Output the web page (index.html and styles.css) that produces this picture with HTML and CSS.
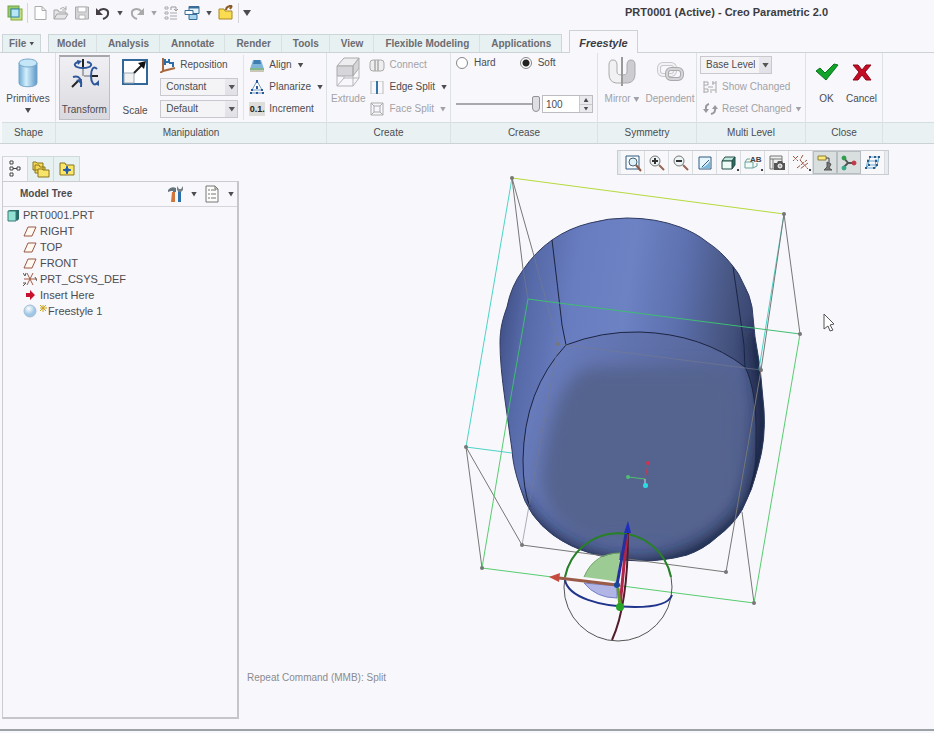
FILE: index.html
```
<!DOCTYPE html>
<html lang="en">
<head>
    <meta charset="UTF-8">
    <meta name="viewport" content="width=device-width, initial-scale=1.0">
    <link rel="stylesheet" href="styles.css">
    <title>PRT0001 (Active) - Creo Parametric 2.0</title>
</head>
<body>
    <header class="titlebar">
        <div class="quick">
            <button aria-label="Window"><svg width="16" height="16"><rect x="1" y="1" width="11" height="11" fill="#9cc96a" stroke="#6ea548"/><rect x="4" y="4" width="11" height="11" fill="#c8dc82" stroke="#82ad3d"/><rect x="4" y="4" width="8" height="8" fill="#b8e6f5" stroke="#2a84b4"/></svg></button>
            <span class="line"></span>
            <button aria-label="New"><svg width="16" height="16"><path d="M3 1.500h7l4 4v9H3zM10 1.500v4h4" fill="#fff" stroke="#aaa"/></svg></button>
            <button aria-label="Open"><svg width="16" height="16"><path d="M1 14V5h4l1 2h7v2M1 14l3-5h11l-3 5z" fill="#e4e4e6" stroke="#a5a5a8"/><path d="M7 4q3-3 6 0M13 1v4H9" fill="none" stroke="#aaa"/></svg></button>
            <button aria-label="Save"><svg width="16" height="16"><path d="M1.500 2h13v12h-13z" fill="#d5d5d7" stroke="#aaa"/><path d="M4 2h8v5H4zM5 10h6v4H5z" fill="#fff" stroke="#b5b5b8"/></svg></button>
            <button aria-label="Undo"><svg width="16" height="16"><path d="M3 7c4-5 11-3 10 2q0 3-5 5" fill="none" stroke="#443f44" stroke-width="2"/><path d="M1 3v7h7z" fill="#443f44"/></svg></button>
            <button class="drop" aria-label="Undo list"><i class="caret"></i></button>
            <button aria-label="Redo"><svg width="16" height="16"><path d="M13 7C9 2 2 4 3 9q0 3 5 5" fill="none" stroke="#aaa" stroke-width="2"/><path d="M15 3v7H8z" fill="#aaa"/></svg></button>
            <button class="drop off" aria-label="Redo list"><i class="caret"></i></button>
            <button aria-label="Regenerate"><svg width="16" height="16"><path d="M2 2h3v2H2zM2 7h3v2H2zM2 12h3v2H2zM7 8h7M7 11h7M7 14h7" fill="none" stroke="#aaa"/><path d="M8 5V2h5M13 2v4M11 4l2 2 2-2" fill="none" stroke="#999"/></svg></button>
            <button aria-label="Windows"><svg width="16" height="16"><path d="M5 1.500h10v7H5z" fill="#e8f4fb" stroke="#386d96"/><path d="M5 2.500h10" stroke="#386d96" stroke-width="2"/><path d="M1 5.500h8v4H1z" fill="#fff" stroke="#386d96"/><path d="M5 9.500h8v5H5z" fill="#a8d5ee" stroke="#386d96"/></svg></button>
            <button class="drop" aria-label="Window list"><i class="caret"></i></button>
            <button aria-label="Close"><svg width="16" height="16"><path d="M1 14V4h5l1 2h7v8z" fill="#f9dc50" stroke="#a98720"/><path d="M8 5c0-3 3-4 6-4M14 1l-3-1M14 1l-2 3" fill="none" stroke="#8c5a26" stroke-width="2"/></svg></button>
            <span class="line"></span>
            <button class="drop" aria-label="Customize"><i class="caret big"></i></button>
        </div>
        <h1>PRT0001 (Active) - Creo Parametric 2.0</h1>
    </header>

    <nav class="tabs">
        <a class="file" href="#file">File <i class="caret small"></i></a>
        <div class="tabset">
            <a href="#model">Model</a>
            <a href="#analysis">Analysis</a>
            <a href="#annotate">Annotate</a>
            <a href="#render">Render</a>
            <a href="#tools">Tools</a>
            <a href="#view">View</a>
            <a href="#flexible">Flexible Modeling</a>
            <a href="#applications">Applications</a>
        </div>
        <a class="current" href="#freestyle">Freestyle</a>
    </nav>

    <section class="ribbon">
        <div class="group shape">
            <div class="tools">
                <button class="big">
                    <svg width="24" height="34" viewBox="0 0 24 34"><defs><linearGradient id="cyl"><stop stop-color="#6fa9d4"/><stop offset=".4" stop-color="#d3effc"/><stop offset="1" stop-color="#5c96c6"/></linearGradient></defs><path d="M3 7v20c0 5 18 5 18 0V7z" fill="url(#cyl)" stroke="#78a8cc"/><ellipse cx="12" cy="7" rx="9" ry="4" fill="#c5e6f7" stroke="#78a8cc"/></svg>
                    <span>Primitives</span><i class="caret"></i>
                </button>
            </div>
            <h2>Shape</h2>
        </div>

        <div class="group manipulation">
            <div class="tools">
                <button class="big pressed">
                    <svg width="32" height="32" viewBox="0 0 32 32"><g fill="none"><path d="M15 18V9M16 18h8" stroke="#a5a8aa" stroke-width="2"/><path d="M15 1v8M24 18h6" stroke="#222" stroke-width="2"/><path d="M11 4C4 5 6 10 15 10s11-5 4-6M29 11c-4-4-6 1-6 7s3 11 6 7M5 19c6-2 9 2 8 10" stroke="#2d579b" stroke-width="2"/><path d="M4 29l7-7" stroke="#222" stroke-width="2"/></g><path d="M9 2l5 1-4 4zM31 22l-4 4 4 2zM8 22l6-1-1 5z" fill="#2d579b"/></svg>
                    <span>Transform</span>
                </button>
                <button class="big">
                    <svg width="28" height="32" viewBox="0 0 28 32"><path d="M2 4h24v24H2z" fill="#fff" stroke="#326799" stroke-width="2"/><path d="M3 17h10v10H3z" fill="#f1f1f1" stroke="#9aa9b5"/><path d="M13 17L23 7" stroke="#222" stroke-width="2"/><path d="M25 5l-2 8-6-6z" fill="#111"/></svg>
                    <span>Scale</span>
                </button>
                <div class="rows">
                    <button><svg width="16" height="16"><path d="M3 1v13M3 14l12-3M3 14l-3 2" stroke="#a9683d" stroke-width="2" fill="none"/><path d="M5 8V2M5 5h4V2M9 6h4v4" stroke="#2d6ea6" stroke-width="2" fill="none"/></svg>Reposition</button>
                    <span class="select"><select aria-label="Constraint"><option>Constant</option></select></span>
                    <span class="select"><select aria-label="Mode"><option>Default</option></select></span>
                </div>
                <div class="rows ruled">
                    <button><svg width="16" height="16"><path d="M4 3h8l3 9H1z" fill="#7fb4d9"/><path d="M5 3h6l1 4H4z" fill="#3e7eb3"/><path d="M1 11h14v2H1z" fill="#84b78c"/><path d="M1 14h14" stroke="#9b9673"/></svg>Align<i class="caret"></i></button>
                    <button><svg width="16" height="16"><path d="M8 2L3 11h10zM1 14h14" fill="#fff" stroke="#7099bd"/><path d="M7 1h2v3H7zM7 7h2v3H7zM2 10h2v2H2zM12 10h2v2h-2zM1 13h2v2H1zM7 13h2v2H7zM13 13h2v2h-2z" fill="#285999"/></svg>Planarize<i class="caret"></i></button>
                    <button><span class="digits">0.1.</span>Increment</button>
                </div>
            </div>
            <h2>Manipulation</h2>
        </div>

        <div class="group create">
            <div class="tools">
                <button class="big off">
                    <svg width="26" height="32" viewBox="0 0 26 32"><path d="M2 10l7-8h15l-6 8z" fill="#ededf0" stroke="#aaa"/><path d="M2 10h16v10H2zM18 10l6-8v10l-6 8z" fill="#d6d5da" stroke="#aaa"/><path d="M2 20v10h16V20M18 30l6-8V12M2 30l7-8h15M9 22v-2" fill="none" stroke="#b5b5b8"/></svg>
                    <span>Extrude</span>
                </button>
                <div class="rows">
                    <button class="off"><svg width="16" height="16"><path d="M6 3H4Q1 3 1 6v5q0 3 3 3h2zM6 3h3v11H6zM9 3h3q3 0 3 3v5q0 3-3 3H9z" fill="#eee" stroke="#aaa"/></svg>Connect</button>
                    <button><svg width="16" height="16"><path d="M2 2.500h12M2 14.500h12" stroke="#ddd"/><path d="M2 2v13M14 2v13" stroke="#bbb"/><path d="M8 2v13" stroke="#3475a5" stroke-width="2"/></svg>Edge Split<i class="caret"></i></button>
                    <button class="off"><svg width="16" height="16"><path d="M2 2h12v12H2zM5 5h6v6H5zM2 2l3 3M14 2l-3 3M2 14l3-3M14 14l-3-3" fill="none" stroke="#aaa"/></svg>Face Split<i class="caret"></i></button>
                </div>
            </div>
            <h2>Create</h2>
        </div>

        <div class="group crease">
            <div class="tools">
                <div class="choice">
                    <label><input type="radio" name="crease">Hard</label>
                    <label><input type="radio" name="crease" checked>Soft</label>
                </div>
                <div class="amount">
                    <input type="range" min="0" max="100" value="100" aria-label="Crease amount">
                    <div class="spin">
                        <input type="text" value="100" aria-label="Crease value">
                        <button aria-label="Increase"><i class="caret up"></i></button>
                        <button aria-label="Decrease"><i class="caret small"></i></button>
                    </div>
                </div>
            </div>
            <h2>Crease</h2>
        </div>

        <div class="group symmetry">
            <div class="tools">
                <button class="big off">
                    <svg width="30" height="32" viewBox="0 0 30 32"><path d="M15 27H9Q2 26 2 18V9q0-5 4-5t4 5v7q0 3 5 3z" fill="#f1f1f3" stroke="#aaa"/><path d="M15 27h6q7-1 7-9V9q0-5-4-5t-4 5v7q0 3-5 3z" fill="#ccccd1" stroke="#aaa"/><path d="M15 1v29" stroke="#999" stroke-width="2"/></svg>
                    <span>Mirror <i class="caret"></i></span>
                </button>
                <button class="big off">
                    <svg width="30" height="32" viewBox="0 0 30 32"><g fill="none"><rect x="4" y="8" width="16" height="11" rx="4" stroke="#c9c9cc" stroke-width="4"/><rect x="4" y="8" width="16" height="11" rx="4" stroke="#f3f3f5" stroke-width="2"/><rect x="12" y="13" width="15" height="10" rx="4" stroke="#aaa" stroke-width="4"/><rect x="12" y="13" width="15" height="10" rx="4" stroke="#d5d5d9" stroke-width="2"/></g></svg>
                    <span>Dependent</span>
                </button>
            </div>
            <h2>Symmetry</h2>
        </div>

        <div class="group level">
            <div class="tools">
                <div class="rows">
                    <span class="select"><select aria-label="Level"><option>Base Level</option></select></span>
                    <button class="off"><svg width="16" height="16"><path d="M2 2v12M2 3h4v3H2M2 10h4v3H2M14 2v12M10 4h4M10 11h4M6 8h5M11 2v4M9 10v4" fill="none" stroke="#aaa"/></svg>Show Changed</button>
                    <button class="off"><svg width="16" height="16"><path d="M7 3Q3 4 4 9M9 13q5-1 4-6" fill="none" stroke="#999" stroke-width="2"/><path d="M1 8h6l-3 4zM10 8h6l-3-4z" fill="#999"/></svg>Reset Changed<i class="caret"></i></button>
                </div>
            </div>
            <h2>Multi Level</h2>
        </div>

        <div class="group close">
            <div class="tools">
                <button class="big"><svg width="24" height="32" viewBox="0 0 24 32"><path d="M1 15l4-3 5 5L19 8l4 1-12 15z" fill="#13a32b" stroke="#08751a"/></svg><span>OK</span></button>
                <button class="big"><svg width="24" height="32" viewBox="0 0 24 32"><path d="M3 9h5l4 5 4-5h5l-6 7 6 8h-5l-4-5-4 5H3l6-8z" fill="#c40c24" stroke="#8f0618"/></svg><span>Cancel</span></button>
            </div>
            <h2>Close</h2>
        </div>
        <div class="group rest"><h2></h2></div>
    </section>

    <main>
        <aside>
            <div class="sidetabs">
                <button class="on" aria-label="Model Tree"><svg width="16" height="18"><path d="M3 1h3v3H3zM3 7h3v3H3zM3 13h3v3H3zM10 7h3v3h-3zM6 8.500h4" fill="#fff" stroke="#444"/></svg></button>
                <button aria-label="Folder Browser"><svg width="18" height="18"><path d="M1 10V2h3l1 1h6v7zM3 13V5h4l1 2h5v6z" fill="#f5da55" stroke="#8b7421"/><path d="M6 17V9h4l1 1h6v7z" fill="#f9e46a" stroke="#8b7421"/></svg></button>
                <button aria-label="Favorites"><svg width="18" height="18"><path d="M2 15V3h5l1 2h8v10z" fill="#fae667" stroke="#8b7421"/><path d="M9 6l1 3 3 1-3 1-1 3-1-3-3-1 3-1z" fill="#245baa" stroke="#245baa"/></svg></button>
            </div>
            <div class="panel">
                <div class="panelhead">
                    <h3>Model Tree</h3>
                    <button aria-label="Settings"><svg width="18" height="18"><path d="M2 5q3-4 8-2v4H7V6H5L2 7z" fill="#65747c"/><path d="M6 7h3v10H5z" fill="#d2753b"/><path d="M12 6h3v11h-3z" fill="#2d6fa9"/><path d="M11 1v4l2 2h2l2-2V1l-2 3h-2z" fill="#778086"/></svg><i class="caret"></i></button>
                    <button aria-label="Show"><svg width="18" height="18"><path d="M3 1h9l3 3v13H3z" fill="#fcfcfa" stroke="#777"/><path d="M5 5h2M5 9h2M5 13h2M8 5h5M8 9h5M8 13h5" stroke="#777"/><path d="M12 1v3h3" fill="none" stroke="#777"/></svg><i class="caret"></i></button>
                </div>
                <ul class="tree">
                    <li class="root"><svg width="14" height="14"><path d="M2 3l2-1h9v9l-2 2z" fill="#266c69"/><path d="M2 3h8v10H2z" fill="#91e2d2" stroke="#397b76"/></svg>PRT0001.PRT</li>
                    <li><svg width="14" height="14"><path d="M5 3h8l-4 9H1z" fill="#fff9f2" stroke="#985844"/></svg>RIGHT</li>
                    <li><svg width="14" height="14"><path d="M5 3h8l-4 9H1z" fill="#fff9f2" stroke="#985844"/></svg>TOP</li>
                    <li><svg width="14" height="14"><path d="M5 3h8l-4 9H1z" fill="#fff9f2" stroke="#985844"/></svg>FRONT</li>
                    <li><svg width="14" height="14"><path d="M4 1l6 12M10 1L4 13M1 7h13" fill="none" stroke="#a15c43"/><path d="M0 1l2 3 1-3M0 11h3l-3 3M12 5l2 4" fill="none" stroke="#555"/></svg>PRT_CSYS_DEF</li>
                    <li><svg width="14" height="14"><path d="M3 5h4V2l5 5-5 5V9H3z" fill="#c6102e"/></svg>Insert Here</li>
                    <li><svg width="14" height="14"><defs><radialGradient id="ball" cx=".4" cy=".3"><stop stop-color="#fff"/><stop offset="1" stop-color="#9fc6e5"/></radialGradient></defs><circle cx="7" cy="7" r="6" fill="url(#ball)" stroke="#a2bfd6"/></svg><svg class="spark" width="8" height="14"><path d="M4 1v7M1 4h7M1 1l6 6M7 1L1 7" stroke="#c8a31e"/></svg>Freestyle 1</li>
                </ul>
            </div>
        </aside>

        <section class="canvas">
            <svg class="scene" viewBox="240 144 694 585">
                <defs>
                    <linearGradient id="side" gradientUnits="userSpaceOnUse" x1="500" y1="330" x2="764" y2="370">
                        <stop stop-color="#42528a"/><stop offset=".08" stop-color="#5568a6"/><stop offset=".25" stop-color="#687dc0"/><stop offset=".45" stop-color="#6c82c3"/><stop offset=".65" stop-color="#5d70ae"/><stop offset=".82" stop-color="#485784"/><stop offset="1" stop-color="#303b64"/>
                    </linearGradient>
                    <linearGradient id="front" gradientUnits="userSpaceOnUse" x1="530" y1="360" x2="745" y2="450">
                        <stop stop-color="#6a7dbe"/><stop offset=".3" stop-color="#6375b2"/><stop offset="1" stop-color="#4e5d8b"/>
                    </linearGradient>
                    <path id="hull" d="M500 343C500 328 503 318 507 307Q511 286 523 270Q535 252 552 240Q569 228 590 223Q608 218 627 218Q656 218 680 227Q696 233 707 242Q721 251 732 265Q739 273 743 283Q750 295 752 307L755 337L760 367L764 410Q766 440 758 467Q753 489 742 510Q733 525 717 537Q704 549 687 555Q665 561 640 561Q612 560 590 553Q570 547 553 535Q541 526 533 515Q524 502 520 487Q513 467 512 450L505 400Q500 365 500 343Z"/>
                    <path id="face" d="M566 345Q602 331 640 332Q702 334 745 367Q758 395 756 440Q756 482 742 510Q733 525 717 537Q704 549 687 555Q665 561 640 561Q612 560 590 553Q570 547 553 535Q541 526 533 515Q523 490 523 460Q524 390 566 345Z"/>
                    <clipPath id="hullclip"><use href="#hull"/></clipPath>
                    <clipPath id="faceclip"><use href="#face"/></clipPath>
                    <filter id="soft" x="-20%" y="-20%" width="140%" height="140%"><feGaussianBlur stdDeviation="8"/></filter>
                </defs>

                <use href="#hull" fill="url(#side)"/>
                <use href="#face" fill="url(#front)"/>
                <g clip-path="url(#faceclip)"><path d="M595 367H715Q737 370 738 405V500Q728 538 680 541H590Q543 524 542 475Q555 370 595 367Z" fill="#55648f" filter="url(#soft)"/></g>
                <g clip-path="url(#hullclip)"><path d="M760 330L770 410Q768 485 745 518Q702 568 640 570Q550 567 512 500" fill="none" stroke="#17203f" stroke-width="20" filter="url(#soft)"/></g>
                <use href="#hull" fill="none" stroke="#303b61"/>

                <g class="seams">
                    <path d="M552 240Q558 290 562 325L566 345Q602 331 640 332Q702 334 745 367Q757 390 756 440V465L750 490"/>
                    <path d="M566 345Q524 390 523 460Q523 490 530 507M733 267Q738 300 744 345L745 367"/>
                </g>

                <g class="cage">
                    <path stroke="#b5da3b" d="M512 178L784 214"/>
                    <path stroke="#4bd4c6" d="M512 178L466 447L512 453M784 214L759 369"/>
                    <path stroke="#777" d="M512 178L523 269M512 178L534 256M784 214L800 334M784 214L761 370M466 447L482 568M466 447L522 545L726 572M754 603L742 512"/>
                    <path stroke="#777b8c" stroke-opacity=".6" d="M523 269L528 299M534 256L558 344L522 545M558 344L761 370"/>
                    <path stroke="#777" d="M761 370L726 572"/>
                    <path stroke="#3fbd72" d="M528 299L800 334M528 299L507 419"/>
                    <path stroke="#57cc70" d="M507 419L482 568L754 603L800 334"/>
                </g>
                <g fill="#777">
                    <circle cx="512" cy="178" r="2"/><circle cx="784" cy="214" r="2"/><circle cx="800" cy="334" r="2"/><circle cx="761" cy="370" r="2"/><circle cx="466" cy="447" r="2"/><circle cx="522" cy="545" r="2"/><circle cx="482" cy="568" r="2"/><circle cx="726" cy="572" r="2"/><circle cx="754" cy="603" r="2"/><circle cx="558" cy="344" r="2"/>
                </g>

                <path d="M645 479L648 464" stroke="#c33b56"/><path d="M645 479L628 477" stroke="#50c070"/><path d="M645 479V485" stroke="#d5dce5"/>
                <circle cx="648" cy="463" r="2" fill="#d03350"/><circle cx="628" cy="477" r="2" fill="#50c070"/><rect x="643" y="483" width="5" height="5" rx="2" fill="#29dce2"/>

                <!-- 3D dragger -->
                <g fill="none">
                    <circle cx="618" cy="587" r="54" stroke="#555"/>
                    <path d="M584 577Q592 555 620 553L617 582L607 580Z" fill="#9ccc93"/><path d="M584 577Q594 553 620 553" stroke="#68a660"/>
                    <path d="M584 583L617 586V598Q596 598 584 583Z" fill="#b0b5e6" stroke="#7481c6"/>
                    <path d="M565 577A54 54 0 0 1 671 577" stroke="#278127" stroke-width="2"/>
                    <path d="M565 580C568 597 600 607 635 607Q668 607 672 595" stroke="#22358c" stroke-width="2"/>
                    <path d="M628 533Q628 605 612 640" stroke="#541c2b" stroke-width="2"/>
                    <path d="M627 534L620 606" stroke="#b02449" stroke-width="3"/>
                    <path d="M626 534L617 585" stroke="#25309a" stroke-width="3"/>
                    <path d="M617 585L559 578" stroke="#9a5c48" stroke-width="3"/>
                    <path d="M618 588L620 606" stroke="#5a9c25" stroke-width="3"/>
                </g>
                <path d="M628 521L631 533H624Z" fill="#1e2ebd"/><path d="M549 577L560 573L559 582Z" fill="#c64b3e"/>
                <circle cx="617" cy="585" r="3" fill="#174899"/><circle cx="620" cy="607" r="4" fill="#28a526"/>
                <path d="M824 314V329L828 326L830 331L833 330L830 325L834 324Z" fill="#fff" stroke="#555"/>
            </svg>

            <div class="viewbar">
                <button aria-label="Refit"><svg width="18" height="18"><path d="M2 2h13v13H2z" fill="#f6fbff" stroke="#315a80"/><circle cx="9" cy="8" r="4" fill="#def1f8" stroke="#4c616f"/><path d="M12 11l5 6" stroke="#8b5c48" stroke-width="2"/></svg></button>
                <button aria-label="Zoom In"><svg width="18" height="18"><circle cx="7" cy="7" r="5" fill="#edf5f7" stroke="#777"/><path d="M4 7h6M7 4v6" stroke="#333" stroke-width="2"/><path d="M11 11l5 5" stroke="#986553" stroke-width="2"/></svg></button>
                <button aria-label="Zoom Out"><svg width="18" height="18"><circle cx="7" cy="7" r="5" fill="#edf5f7" stroke="#777"/><path d="M4 7h6" stroke="#333" stroke-width="2"/><path d="M11 11l5 5" stroke="#986553" stroke-width="2"/></svg></button>
                <button aria-label="Repaint"><svg width="18" height="18"><path d="M3 3h12v12H3z" fill="#e7f5fc" stroke="#315a80"/><path d="M4 14Q10 13 14 7v7z" fill="#78b9dc"/><path d="M6 13l7-7" stroke="#315a80"/></svg></button>
                <button class="more" aria-label="Display Style"><svg width="16" height="18"><path d="M1 7l3-4h10l-3 4z" fill="#c1e8dc" stroke="#254e48"/><path d="M11 7l3-4v8l-3 4z" fill="#246e60" stroke="#254e48"/><path d="M1 7h10v8H1z" fill="#eefaf5" stroke="#254e48"/></svg></button>
                <button class="more" aria-label="Saved Orientations"><svg width="18" height="18"><path d="M1 8l2-3h3M1 8h8v6H1zM9 14l4-2V9" fill="#f0faf8" stroke="#6ba399"/><text x="6" y="8">AB</text></svg></button>
                <button aria-label="View Manager"><svg width="18" height="18"><path d="M2 2h12v13H2zM2 5h12M5 5v10" fill="#eef0f0" stroke="#777"/><path d="M6 9h3l1-2h4l1 2h2v7H6z" fill="#555"/><circle cx="12" cy="12" r="2" fill="#aaa" stroke="#fff"/></svg></button>
                <button class="more" aria-label="Datum Display"><svg width="18" height="18"><path d="M1 2l5 5M6 2L1 7M5 14L15 6M8 6l8 9M16 9l-8 6M11 1l-3 5" fill="none" stroke="#985641" stroke-dasharray="4 1"/></svg></button>
                <button class="on" aria-label="Annotation Display"><svg width="18" height="18"><path d="M2 2h8v4H2z" fill="#fbe978" stroke="#8d7e37"/><path d="M10 4h3v5" fill="none" stroke="#444"/><path d="M11 8l4 2-2 4 3 2H8l3-3z" fill="#777" stroke="#555"/></svg></button>
                <button class="on" aria-label="Spin Center"><svg width="18" height="18"><path d="M4 4l4 5-4 4M8 9h7" fill="none" stroke="#555" stroke-width="2"/><circle cx="4" cy="4" r="2" fill="#2e9e4b" stroke="#2e9e4b"/><circle cx="4" cy="14" r="2" fill="#36a987" stroke="#36a987"/><circle cx="14" cy="9" r="2" fill="#c63649" stroke="#c63649"/></svg></button>
                <button aria-label="Mesh"><svg width="18" height="18"><path d="M6 2L4 12M15 2l-2 10M5 3h11M4 11h10M4 5L2 15M12 5l-1 10M3 7h12M2 14h9M11 14l3-3M2 14l3-3" fill="none" stroke="#6aa7cc"/><path d="M5 3h2M10 3h2M14 3h2M3 7h2M11 7h2M4 11h2M12 11h2M1 14h2M9 14h2" stroke="#285d8e" stroke-width="2"/></svg></button>
            </div>
            <p class="message">Repeat Command (MMB): Split</p>
        </section>
    </main>
    <footer></footer>
</body>
</html>
```
FILE: styles.css
```
*{
    box-sizing:border-box;
    margin:0;
    padding:0;
}
body{
    min-height:100vh;
    display:flex;
    flex-direction:column;

    background:#f8f7fb;
    color:#4c4c50;
    font-family:"Liberation Sans", Arial, sans-serif;
    font-size:10px;
    line-height:12px;
}
button, select, input{
    font:inherit;
    color:inherit;
}
button{
    display:flex;
    align-items:center;
    border:none;
    background:none;
    white-space:nowrap;
}
svg{
    display:block;
    flex-shrink:0;
}
a{
    color:inherit;
    text-decoration:none;
}

/* little drop-down arrow */
.caret{
    flex-shrink:0;
    width:6px;
    height:5px;
    background:#4c4c50;
    clip-path:polygon(0 0, 100% 0, 50% 100%);
}
.caret.big{
    width:8px;
    height:6px;
}
.caret.small{
    width:5px;
    height:4px;
}
.caret.up{
    width:5px;
    height:4px;
    clip-path:polygon(50% 0, 100% 100%, 0 100%);
}
.off{
    color:#a2a2a6;
}
.off .caret{
    background:#a2a2a6;
}

/* title bar */
.titlebar{
    display:flex;
    align-items:flex-start;
    height:30px;
    padding:5px 106px 0 7px;
}
.quick{
    display:flex;
    align-items:center;
    gap:5px;
    height:16px;
}
.quick .line{
    width:1px;
    height:20px;
    margin:0 -1px;
    background:#d5d5da;
}
.quick .drop{
    width:8px;
    justify-content:center;
}
.titlebar h1{
    margin-left:auto;
    color:#3c3c40;
    font-size:11px;
    line-height:14px;
}

/* ribbon tabs */
.tabs{
    display:flex;
    align-items:flex-end;
    height:23px;
    padding-left:2px;
    border-bottom:1px solid #ccd3d6;

    color:#6b6b70;
    font-weight:bold;
}
.tabs a{
    line-height:17px;
}
.file, .tabset{
    display:flex;
    align-items:center;
    height:18px;
    border:1px solid #ccd6d9;
    border-bottom:none;
    background:#e8f1f2;
}
.file{
    gap:3px;
    width:39px;
    margin-right:7px;
    padding-left:6px;
}
.tabset a{
    padding:0 10px 0 11px;
    border-right:1px solid #d8e0e2;
}
.tabset a:first-child{
    padding-left:8px;
}
.tabset a:last-child{
    border-right:none;
}
.tabs .current{
    height:23px;
    margin:0 0 -1px 7px;
    padding:0 9px;
    border:1px solid #ccd3d6;
    border-bottom:none;
    background:#f8f7fb;

    color:#3c3c40;
    font-size:11px;
    font-style:italic;
    line-height:24px;
}

/* ribbon */
.ribbon{
    display:flex;
    padding-left:2px;
    border-bottom:1px solid #ccd3d6;
}
.group{
    display:flex;
    flex-direction:column;
    flex-shrink:0;
    height:90px;
    border-right:1px solid #dce1e4;
}
.group h2{
    height:21px;
    margin-top:auto;
    border-top:1px solid #d5dee1;
    background:#e9f1f2;

    font-size:10px;
    font-weight:normal;
    line-height:20px;
    text-align:center;
}
.tools{
    display:flex;
    padding:2px 3px 0;
}
.shape{
    width:54px;
}
.manipulation{
    width:271px;
}
.create{
    width:124px;
}
.crease{
    width:147px;
}
.symmetry{
    width:99px;
}
.level{
    width:109px;
}
.close{
    width:77px;
}
.rest{
    flex:1;
    border-right:none;
}
.big{
    flex-direction:column;
    gap:5px;
    height:65px;
    padding-top:1px;
}
.shape .big{
    width:46px;
    gap:3px;
}
.manipulation .big{
    width:52px;
    justify-content:space-between;
    padding:1px 0 3px;
}
.manipulation .pressed{
    border:1px solid #bfc0c5;
    border-top:2px solid #a6a7ac;
    background:linear-gradient(#f0f0f4, #d9d9df);
}
.create .tools{
    padding-left:4px;
}
.create .big, .close .big{
    width:38px;
}
.symmetry .tools{
    padding:2px 0;
}
.symmetry .big{
    width:48px;
}
.big .caret{
    display:inline-block;
}
.rows{
    display:grid;
    grid-template-rows:20px 20px 20px;
    row-gap:2px;
    align-items:center;
}
.rows button{
    gap:4px;
}
.rows button .caret{
    margin-left:2px;
}
.ruled{
    margin-left:5px;
    padding-left:5px;
    border-left:1px solid #e2e2e7;
}
.create .rows{
    margin-left:4px;
}
.digits{
    width:16px;
    height:14px;
    background:#deddd9;
    color:#222;
    line-height:14px;
    font-weight:bold;
    font-size:9px;
}
.select{
    display:grid;
    align-items:center;
    width:78px;
    height:18px;
}
.select select{
    grid-area:1 / 1;
    width:100%;
    height:18px;
    padding:0 16px 0 5px;
    border:1px solid #c8c8ce;
    border-radius:0;
    appearance:none;
    background:linear-gradient(#e9e9ee, #e0e0e6) right / 12px 100% no-repeat #f4f4f7;
}
.select::after{
    content:"";
    grid-area:1 / 1;
    justify-self:end;
    width:7px;
    height:5px;
    margin-right:3px;
    background:#555;
    clip-path:polygon(0 0, 100% 0, 50% 100%);
    pointer-events:none;
}
.level .select{
    width:72px;
}
.level button{
    padding-left:2px;
}
.level button .caret{
    margin-left:0;
}

.crease .tools{
    flex-direction:column;
    gap:26px;
    padding:4px 5px 0;
}
.choice{
    display:flex;
    gap:24px;
}
.choice label{
    display:flex;
    align-items:center;
    gap:6px;
}
.choice input{
    width:12px;
    height:12px;
    border:1px solid #85858a;
    border-radius:50%;
    appearance:none;
    background:#fff;
}
.choice input:checked{
    background:radial-gradient(#222 0 3px, #fff 4px);
}
.amount{
    display:flex;
    align-items:center;
    gap:2px;
}
.amount input[type=range]{
    width:84px;
    height:18px;
    appearance:none;
    background:linear-gradient(#a8a8ad, #a8a8ad) center / 100% 2px no-repeat;
}
.amount input[type=range]::-webkit-slider-thumb{
    width:8px;
    height:16px;
    border:1px solid #929298;
    border-radius:2px 2px 4px 4px;
    appearance:none;
    background:#dedee3;
}
.spin{
    display:grid;
    grid-template-columns:36px 13px;
    grid-template-rows:8px 8px;
    border:1px solid #bcbcc2;
}
.spin input{
    grid-row:1 / 3;
    width:36px;
    height:16px;
    padding-left:3px;
    border:none;
    background:#fff;
}
.spin button{
    justify-content:center;
    border-left:1px solid #c8c8ce;
    background:#e9e9ee;
}
.spin button + button{
    border-top:1px solid #c8c8ce;
}

/* work area */
main{
    flex:1;
    display:grid;
    grid-template-columns:240px 1fr;
    min-height:585px;
}
aside{
    display:flex;
    flex-direction:column;
    padding:12px 1px 10px 2px;
}
.sidetabs{
    display:flex;
}
.sidetabs button{
    justify-content:center;
    width:26px;
    height:25px;
    border:1px solid #d0dadd;
    border-left:none;
    border-bottom:none;
    background:#e8f1f2;
}
.sidetabs .on{
    border-left:1px solid #d0d0d5;
    background:#f8f7fb;
}
.panel{
    flex:1;
    border:1px solid #cbcbd0;
    border-right:2px solid #c6c6ca;
    border-bottom:2px solid #c6c6ca;
}
.panelhead{
    display:flex;
    align-items:center;
    gap:4px;
    height:25px;
    padding:0 3px 0 17px;
    border-bottom:1px solid #d5d5da;
}
.panelhead h3{
    margin-right:auto;
    font-size:10px;
}
.panelhead button{
    gap:7px;
}
.panelhead button + button{
    margin-left:2px;
}
.tree{
    list-style:none;
    font-size:11px;
    line-height:16px;
}
.tree li{
    display:flex;
    align-items:center;
    gap:3px;
    height:16px;
    padding-left:20px;
}
.tree .root{
    padding-left:3px;
}
.tree .spark{
    margin:0 -2px 0 -1px;
}

/* everything in the canvas shares one cell, the bar and message lie over the model */
.canvas{
    display:grid;
    grid-template:1fr / 1fr;
}
.canvas > *{
    grid-area:1 / 1;
}
.scene{
    width:100%;
    height:100%;
    min-height:0;
}
.seams{
    fill:none;
    stroke:#1c2442;
}
.cage{
    fill:none;
}
.viewbar{
    place-self:start end;
    display:flex;
    margin:6px 45px 0 0;
    padding:0 3px;
    border:1px solid #c9ccd2;
    background:#e6ebef;
}
.viewbar button{
    justify-content:center;
    width:24px;
    height:23px;
    border-right:1px solid #d9dce1;
    background:#f8f8fb;
}
.viewbar .on{
    border:1px solid #b7bcc0;
    background:#d9dfdf;
}
.viewbar .more{
    background:linear-gradient(#444, #444) 20px 18px / 2px 2px no-repeat #f8f8fb;
}
.viewbar text{
    fill:#444;
    font-size:8px;
    font-weight:bold;
}
.message{
    place-self:end start;
    margin:0 0 45px 7px;
    color:#8b8b90;
}
footer{
    height:4px;
    border-top:2px solid #9da2a6;
}
```
